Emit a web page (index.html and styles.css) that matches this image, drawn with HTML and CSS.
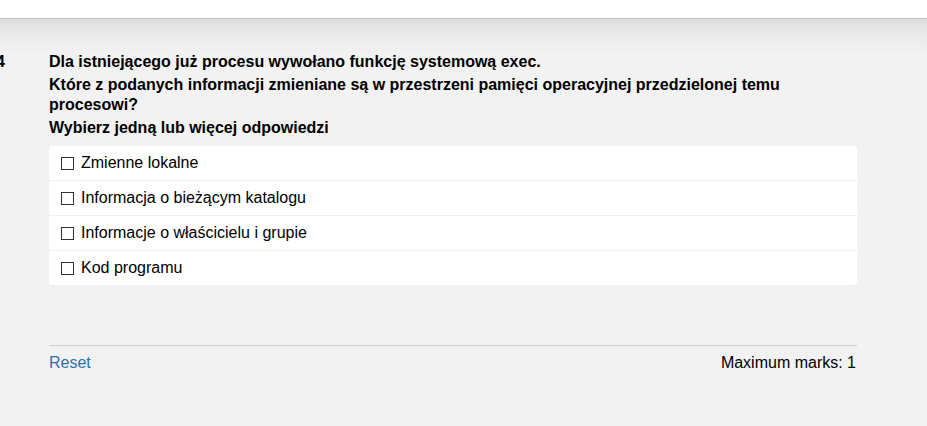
FILE: index.html
```html
<!DOCTYPE html>
<html lang="pl">
<head>
<meta charset="utf-8">
<link rel="stylesheet" href="styles.css">
</head>
<body>
<div class="topbar"></div>
<div class="content">
  <div class="question">
    <div class="qnum"><span>14</span></div>
    <div class="qbody">
      <p class="qtext">Dla istniejącego już procesu wywołano funkcję systemową exec.</p>
      <p class="qtext">Które z podanych informacji zmieniane są w przestrzeni pamięci operacyjnej przedzielonej temu procesowi?</p>
      <p class="qtext">Wybierz jedną lub więcej odpowiedzi</p>
      <div class="options">
        <div class="option"><span class="box"></span><span>Zmienne lokalne</span></div>
        <div class="option"><span class="box"></span><span>Informacja o bieżącym katalogu</span></div>
        <div class="option"><span class="box"></span><span>Informacje o właścicielu i grupie</span></div>
        <div class="option"><span class="box"></span><span>Kod programu</span></div>
      </div>
      <div class="footer">
        <a class="reset" href="#">Reset</a>
        <span class="marks">Maximum marks: 1</span>
      </div>
    </div>
  </div>
</div>
</body>
</html>
```
FILE: styles.css
```css
html, body {
  margin: 0;
  padding: 0;
  height: 100%;
  overflow: hidden;
}
body {
  background: #f2f2f2;
  font-family: "Liberation Sans", Arial, sans-serif;
  color: #000;
}
.topbar {
  height: 18px;
  background: #fff;
  border-bottom: 1px solid #c4c4c4;
}
.content {
  background: linear-gradient(to bottom, #dedede 0px, #ebebeb 18px, #f2f2f2 36px);
  padding-top: 33px;
  height: 374px;
}
.question {
  display: flex;
}
.qnum {
  width: 49px;
  flex: none;
  font-weight: bold;
  font-size: 16px;
  line-height: 20px;
  overflow: hidden;
}
.qnum span {
  display: block;
  margin-left: -13px;
}
.qbody {
  width: 808px;
}
.qtext {
  margin: 0 0 3px 0;
  font-weight: bold;
  font-size: 16px;
  line-height: 20px;
}
.options {
  margin-top: 8px;
  background: #fff;
  border-radius: 3px;
}
.option {
  display: flex;
  align-items: center;
  height: 34px;
  padding-left: 12px;
  font-size: 16px;
  border-top: 1px solid #efefef;
}
.option:first-child {
  border-top: none;
}
.box {
  width: 11px;
  height: 11px;
  border: 1px solid #333;
  margin-right: 7px;
  flex: none;
}
.footer {
  margin-top: 60px;
  border-top: 1px solid #cfcfcf;
  padding-top: 7px;
  display: flex;
  justify-content: space-between;
  font-size: 16px;
  line-height: 20px;
}
.reset {
  color: #2a73ab;
  text-decoration: none;
}
.marks {
  padding-right: 1px;
}
```
